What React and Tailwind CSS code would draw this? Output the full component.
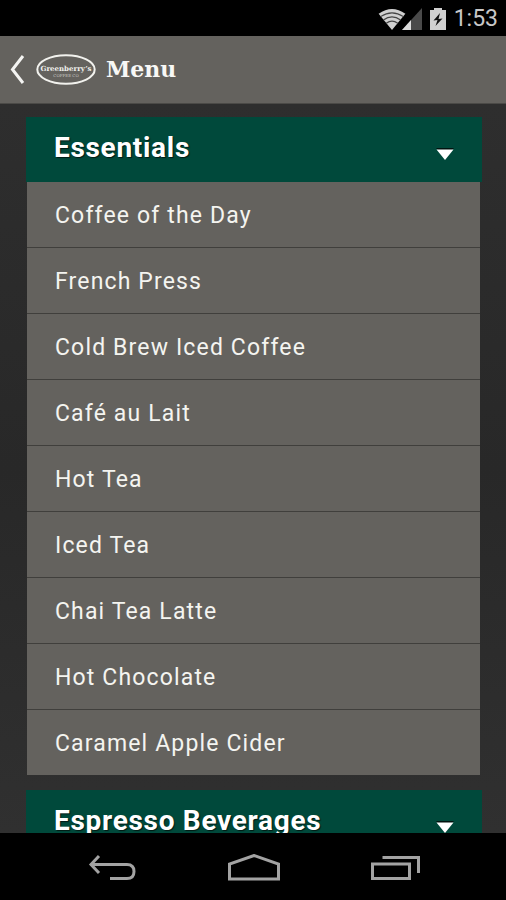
import React, { useState } from 'react';

const sections = [
  {
    title: 'Essentials',
    items: [
      'Coffee of the Day',
      'French Press',
      'Cold Brew Iced Coffee',
      'Café au Lait',
      'Hot Tea',
      'Iced Tea',
      'Chai Tea Latte',
      'Hot Chocolate',
      'Caramel Apple Cider',
    ],
  },
  {
    title: 'Espresso Beverages',
    items: ['Espresso', 'Cappuccino', 'Latte', 'Mocha'],
  },
];

const StatusBar = () => (
  <div className="flex h-9 shrink-0 items-center justify-end bg-black pt-0.5 pr-2 text-[#c8c8c8]">
    <svg width="28" height="21" viewBox="0 0 28 22" aria-hidden="true">
      <path d="M0 5 Q14 -5 28 5 L14 22 Z" fill="#d0d0d0" />
      <g fill="none" stroke="#444" strokeWidth="1.2">
        <path d="M2 8 Q14 0 26 8" />
        <path d="M5 11.5 Q14 5 23 11.5" />
        <path d="M8 15 Q14 10.5 20 15" />
      </g>
    </svg>
    <svg width="20" height="22" viewBox="0 0 20 22" className="-ml-1" aria-hidden="true">
      <path d="M0 22 L20 0 V22 Z" fill="#4a4a4a" />
      <path d="M0 22 L9 12 V22 Z" fill="#dcdcdc" />
    </svg>
    <svg width="16" height="22" viewBox="0 0 16 22" className="ml-2" aria-hidden="true">
      <path d="M4 0 H12 V2 H16 V22 H0 V2 H4 Z" fill="#d0d0d0" />
      <path d="M10 5 L3.5 12.5 L7.5 12 L5.5 18 L12.5 10.5 L8.5 11 Z" fill="#111" />
    </svg>
    <span className="ml-2 text-[23px] leading-9">1:53</span>
  </div>
);

const Logo = () => (
  <svg width="60" height="32" viewBox="0 0 60 32" role="img" aria-label="Greenberry's">
    <ellipse cx="30" cy="15.5" rx="28.7" ry="14.2" fill="none" stroke="#f2f2ee" strokeWidth="2" />
    <text x="30" y="17" textAnchor="middle" fontFamily="DejaVu Serif, serif" fontWeight="700" fontSize="7" fill="#f2f2ee">
      Greenberry’s
    </text>
    <text x="30" y="23" textAnchor="middle" fontFamily="DejaVu Serif, serif" fontSize="4" fill="#c9c9c4">
      COFFEE CO
    </text>
  </svg>
);

const Header = () => (
  <header className="flex h-[68px] shrink-0 items-center border-b border-[#4b4a47] bg-[#64625e] pl-2">
    <button className="flex items-center" aria-label="Back">
      <svg width="20" height="30" viewBox="0 0 20 30" fill="none" stroke="#f4f4f2" strokeWidth="3" aria-hidden="true">
        <path d="M15 1 L4.5 14.5 L15 28" />
      </svg>
      <span className="ml-2">
        <Logo />
      </span>
    </button>
    <h1 className="ml-2.5 font-['DejaVu_Serif',serif] text-[22px] font-bold text-[#f8f8f6]">Menu</h1>
  </header>
);

const Section = ({ title, items, defaultOpen }) => {
  const [open, setOpen] = useState(defaultOpen);

  return (
    <section>
      <button
        className="flex h-[65px] w-full items-center justify-between bg-[#00493b] px-7 text-left"
        aria-expanded={open}
        onClick={() => setOpen(!open)}
      >
        <span className="pb-1 text-[28px] leading-8 font-bold tracking-wide text-white text-shadow-[1px_1px_1px_#001a14]">{title}</span>
        <svg width="18" height="12" viewBox="0 0 18 12" className="mt-2" aria-hidden="true">
          <path d="M0 0 H18 L16 2 H2 Z" fill="#00130f" />
          <path d="M0.5 1.5 H17.5 L9 12 Z" fill="#fff" />
        </svg>
      </button>
      {open && (
        <ul className="mr-0.5 ml-px bg-[#64625e]">
          {items.map((item) => (
            <li key={item} className="border-b border-[#403f3c] last:border-b-0">
              <a href="#item" className="block h-[65px] pl-7 text-[23px] leading-[68px] tracking-wider text-[#f4f4f0]">
                {item}
              </a>
            </li>
          ))}
        </ul>
      )}
    </section>
  );
};

const NavBar = () => (
  <nav className="flex h-[67px] shrink-0 items-center justify-center gap-[90px] bg-black pt-0.5 pl-0.5 text-[#a3a3a3]">
    <button aria-label="Go back">
      <svg width="52" height="28" viewBox="0 0 52 28" fill="none" stroke="currentColor" strokeWidth="3" aria-hidden="true">
        <path d="M13 2 L5 10.5 L13 19" />
        <path d="M5 10.5 H41 Q48 10.5 48 17.5 Q48 24.5 41 24.5 H24" />
      </svg>
    </button>
    <button aria-label="Home">
      <svg width="52" height="28" viewBox="0 0 52 28" fill="none" stroke="currentColor" strokeWidth="3" aria-hidden="true">
        <path d="M1.5 25 V10 L26 1.5 L50.5 10 V25 Z" />
      </svg>
    </button>
    <button aria-label="Recent apps">
      <svg width="52" height="28" viewBox="0 0 52 28" fill="none" stroke="currentColor" strokeWidth="3" aria-hidden="true">
        <path d="M2.5 10 H39.5 V24.5 H2.5 Z" />
        <path d="M12.5 3.5 H48.5 V19" />
      </svg>
    </button>
  </nav>
);

const App = () => {
  return (
    <div className="flex h-screen flex-col bg-[#2b2b2b] font-[Roboto,sans-serif]">
      <StatusBar />
      <Header />
      <main className="flex min-h-0 flex-1 flex-col gap-[15px] overflow-hidden bg-linear-to-b from-[#2e2e2e] via-[#282828] to-[#303030] pt-[13px] pr-6 pl-[26px]">
        {sections.map((section, i) => (
          <Section key={section.title} {...section} defaultOpen={i === 0} />
        ))}
      </main>
      <NavBar />
    </div>
  );
};

export default App;
